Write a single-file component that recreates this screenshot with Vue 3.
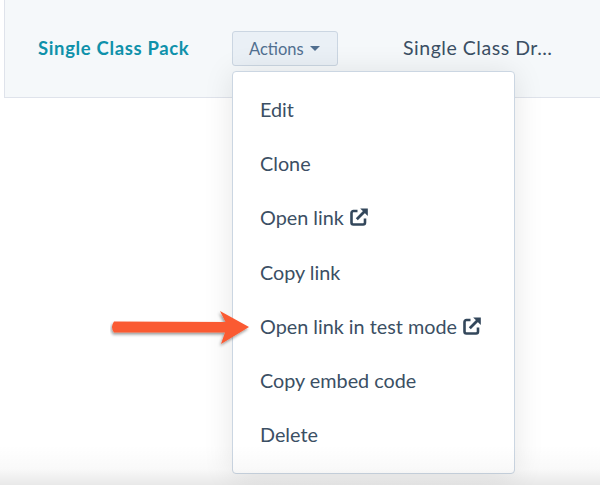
<script setup>
const items = [
  { label: 'Edit' },
  { label: 'Clone' },
  { label: 'Open link', ext: true },
  { label: 'Copy link' },
  { label: 'Open link in test mode', ext: true },
  { label: 'Copy embed code' },
  { label: 'Delete' },
]
</script>

<template>
  <div class="page">
    <div class="bar">
      <a class="name">Single Class Pack</a>
      <button class="actions">Actions<span class="caret"></span></button>
      <span class="cell">Single Class Dr…</span>
    </div>
    <ul class="menu">
      <li v-for="item in items" :key="item.label" class="item">
        {{ item.label }}
        <svg v-if="item.ext" class="ext" viewBox="0 0 18 18" width="18" height="18" aria-hidden="true">
          <path d="M7.5 3H3.4A1.9 1.9 0 0 0 1.5 4.9v9.7a1.9 1.9 0 0 0 1.9 1.9h9.7a1.9 1.9 0 0 0 1.9-1.9v-4.1" fill="none" stroke="#33475b" stroke-width="2.6"/>
          <path d="M6.8 11.2 15 3" fill="none" stroke="#33475b" stroke-width="2.8"/>
          <path d="M10.2 0.4H17.8V8Z" fill="#33475b"/>
        </svg>
      </li>
    </ul>
    <div class="fade"></div>
    <svg class="arrow" viewBox="0 0 142 56" width="142" height="56" aria-hidden="true">
      <defs>
        <filter id="arrow-shadow" x="-10%" y="-20%" width="120%" height="150%">
          <feDropShadow dx="-1" dy="2" stdDeviation="1.6" flood-color="#000" flood-opacity="0.4"/>
        </filter>
      </defs>
      <path d="M4 14.5 115.5 15 110 4 139 20 111 37 115 25.5 4 25.5Q0 20 4 14.5Z" fill="#fa5a32" filter="url(#arrow-shadow)"/>
    </svg>
  </div>
</template>

<style>
body { margin: 0; background: #fff; }
</style>

<style scoped>
.page {
  position: relative;
  width: 600px;
  height: 485px;
  overflow: hidden;
  background: #fff;
  font-family: Lato, "Open Sans", sans-serif;
  color: #33475b;
}
.bar {
  box-sizing: border-box;
  height: 98px;
  margin-left: 4px;
  padding-top: 31px;
  display: flex;
  align-items: flex-start;
  background: #f5f8fa;
  border-left: 1px solid #dfe3eb;
  border-bottom: 1px solid #dfe3eb;
}
.name {
  flex: none;
  margin-left: 33px;
  width: 194px;
  line-height: 34px;
  font-size: 18.5px;
  letter-spacing: 0.65px;
  font-weight: 700;
  color: #0f91aa;
}
.actions {
  box-sizing: border-box;
  flex: none;
  width: 106px;
  height: 35px;
  padding: 0 0 0 1px;
  display: flex;
  align-items: center;
  justify-content: flex-start;
  padding-left: 16px;
  gap: 6px;
  font: inherit;
  font-size: 16.5px;
  color: #516f90;
  background: #eaf0f6;
  border: 1px solid #cbd6e2;
  border-radius: 3px;
}
.caret {
  width: 0;
  height: 0;
  border-left: 5px solid transparent;
  border-right: 5px solid transparent;
  border-top: 5px solid #516f90;
}
.cell {
  flex: none;
  margin-left: 65px;
  line-height: 34px;
  font-size: 19.5px;
  letter-spacing: 0.53px;
  color: #3b4f64;
}
.menu {
  position: absolute;
  left: 232px;
  top: 71px;
  box-sizing: border-box;
  width: 283px;
  height: 403px;
  margin: 0;
  padding: 10px 0 0 27px;
  list-style: none;
  background: #fff;
  border: 1px solid #cbd6e2;
  border-radius: 4px;
  box-shadow: 0 2px 30px rgba(0, 0, 0, 0.1);
}
.item {
  height: 54.17px;
  display: flex;
  align-items: center;
  gap: 6px;
  font-size: 19.8px;
  color: #3b4f64;
}
.ext { flex: none; }
.fade {
  position: absolute;
  left: 0;
  right: 0;
  bottom: 0;
  height: 40px;
  background: linear-gradient(to bottom, rgba(0, 0, 0, 0), rgba(0, 0, 0, 0.025) 60%, rgba(0, 0, 0, 0.09));
  pointer-events: none;
}
.arrow {
  position: absolute;
  left: 110px;
  top: 307px;
}
</style>
